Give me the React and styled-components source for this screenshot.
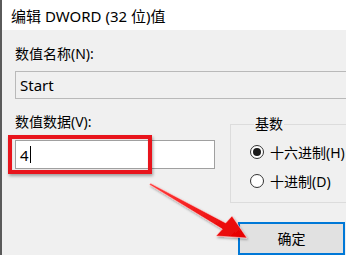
import styled, { createGlobalStyle } from "styled-components";

const GlobalStyle = createGlobalStyle`
    html, body {
        margin: 0;
        padding: 0;
        background: #f0f0f0;
    }
    * {
        box-sizing: border-box;
    }
`;

const Window = styled.div`
    position: relative;
    display: flex;
    flex-direction: column;
    width: 346px;
    height: 255px;
    overflow: hidden;
    background: #f0f0f0;
    border-left: 2px solid #5a5a5a;
    font-family: "Noto Sans", "Noto Sans CJK SC", sans-serif;
    color: #000000;
`;

const TitleBar = styled.div`
    display: flex;
    align-items: center;
    height: 31px;
    padding-left: 9px;
    background: #ffffff;
    font-size: 15px;
`;

const Body = styled.div`
    display: flex;
    flex-direction: column;
    padding: 14px 0 0 13px;
`;

const Label = styled.div`
    font-size: 14px;
    line-height: 20px;
    height: 20px;
`;

const TextBox = styled.div`
    display: flex;
    align-items: center;
    height: ${(p) => p.$height}px;
    width: ${(p) => p.$width};
    margin-top: ${(p) => p.$top}px;
    padding-left: 4px;
    border: 1px solid ${(p) => (p.$readOnly ? "#b9b9b9" : "#a0a0a0")};
    border-right: ${(p) => (p.$readOnly ? "none" : undefined)};
    background: ${(p) => (p.$readOnly ? "#f0f0f0" : "#ffffff")};
    font-size: 15px;
`;

const Caret = styled.span`
    display: inline-block;
    width: 1px;
    height: 17px;
    margin-left: 1px;
    background: #000000;
`;

const LowerRow = styled.div`
    display: flex;
    margin-top: 13px;
`;

const DataColumn = styled.div`
    display: flex;
    flex-direction: column;
    width: 200px;
`;

const Group = styled.fieldset`
    flex-shrink: 0;
    width: 160px;
    height: 89px;
    margin: 2px 0 0 15px;
    padding: 0 0 0 19px;
    border: 1px solid #dcdcdc;
    border-right: none;
    display: flex;
    flex-direction: column;
`;

const Legend = styled.legend`
    margin-left: 4px;
    padding: 0 1px;
    font-size: 14px;
    line-height: 20px;
`;

const RadioRow = styled.label`
    display: flex;
    align-items: center;
    gap: 6px;
    height: 20px;
    margin-top: ${(p) => p.$top}px;
    font-size: 14px;
    white-space: nowrap;
`;

const RadioCircle = styled.span`
    display: flex;
    align-items: center;
    justify-content: center;
    width: 14px;
    height: 14px;
    border-radius: 50%;
    border: 1px solid #333333;
    background: #ffffff;

    &::after {
        content: "";
        display: ${(p) => (p.$checked ? "block" : "none")};
        width: 8px;
        height: 8px;
        border-radius: 50%;
        background: #1a1a1a;
    }
`;

const ButtonRow = styled.div`
    display: flex;
    justify-content: flex-end;
    margin-top: 19px;
    padding-right: 1px;
`;

const OkButton = styled.div`
    display: flex;
    align-items: center;
    justify-content: center;
    width: 107px;
    height: 33px;
    border: 2px solid #0078d7;
    background: #e1e1e1;
    font-size: 14px;
    padding-bottom: 2px;
`;

const Highlight = styled.div`
    position: absolute;
    left: 6px;
    top: 135px;
    width: 144px;
    height: 39px;
    border: 4px solid #e8141c;
    box-shadow: 1px 2px 3px rgba(0, 0, 0, 0.35), inset 0 0 1px rgba(120, 0, 0, 0.4);
`;

const ArrowLayer = styled.svg`
    position: absolute;
    left: -2px;
    top: 0;
    width: 346px;
    height: 255px;
    pointer-events: none;
`;

const App = () => {
    return (
        <>
            <GlobalStyle />
            <Window>
                <TitleBar>编辑 DWORD (32 位)值</TitleBar>
                <Body>
                    <Label>数值名称(N):</Label>
                    <TextBox $readOnly $height={28} $width="340px" $top={7}>
                        Start
                    </TextBox>
                    <LowerRow>
                        <DataColumn>
                            <Label>数值数据(V):</Label>
                            <TextBox $height={29} $width="200px" $top={8}>
                                4<Caret />
                            </TextBox>
                        </DataColumn>
                        <Group>
                            <Legend>基数</Legend>
                            <RadioRow $top={8}>
                                <RadioCircle $checked />
                                十六进制(H)
                            </RadioRow>
                            <RadioRow $top={9}>
                                <RadioCircle />
                                十进制(D)
                            </RadioRow>
                        </Group>
                    </LowerRow>
                    <ButtonRow>
                        <OkButton>确定</OkButton>
                    </ButtonRow>
                </Body>
                <Highlight />
                <ArrowLayer viewBox="0 0 346 255">
                    <defs>
                        <filter id="glow" x="-10%" y="-10%" width="120%" height="120%">
                            <feDropShadow dx="1" dy="1.5" stdDeviation="1.2" floodColor="#000" floodOpacity="0.35" />
                        </filter>
                        <linearGradient id="redFill" x1="0" y1="0" x2="1" y2="1">
                            <stop offset="0" stopColor="#ff3b3b" />
                            <stop offset="1" stopColor="#e60000" />
                        </linearGradient>
                    </defs>
                    <polygon
                        points="150.5,183.3 225.7,222.9 232,216 247,238 216,236 222.3,229.1 149.5,184.7"
                        fill="url(#redFill)"
                        stroke="#ffd0d0"
                        strokeWidth="0.6"
                        filter="url(#glow)"
                    />
                </ArrowLayer>
            </Window>
        </>
    );
};

export default App;
